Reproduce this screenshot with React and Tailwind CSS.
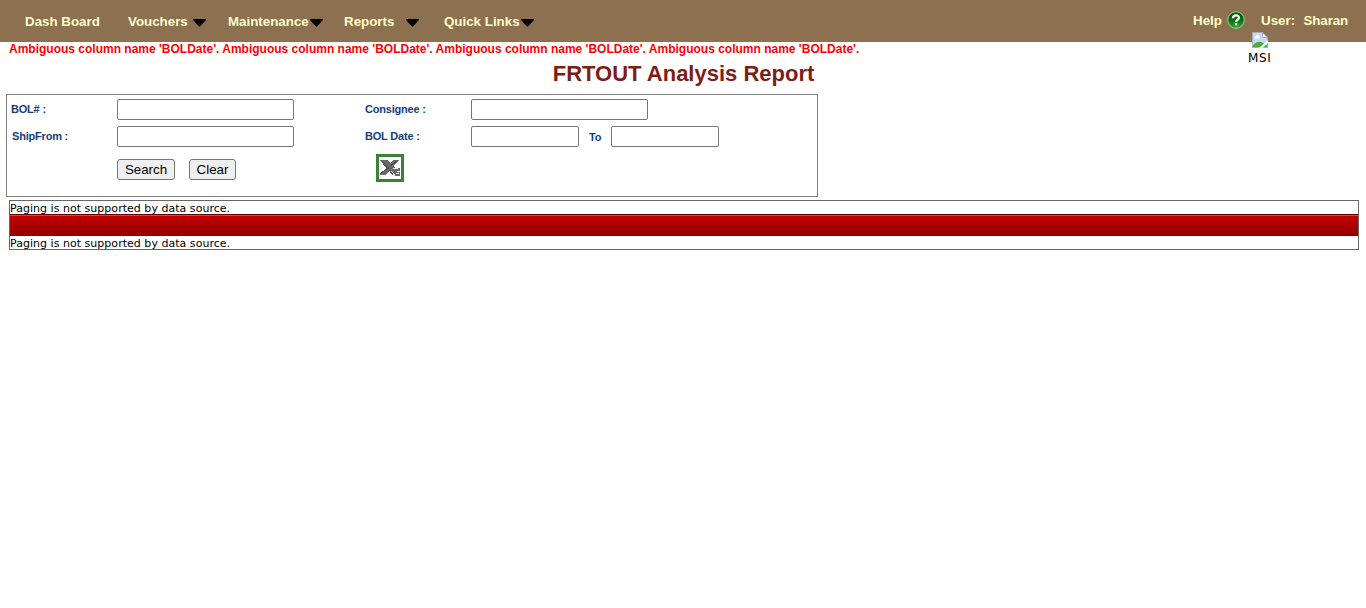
const navFont = 'font-["Liberation_Sans",Arial,sans-serif] text-[13.33px] leading-[16px] font-bold text-[#ffffcc] whitespace-nowrap';

function Arrow() {
  return (
    <svg className="block mt-[5px] h-2 w-[13px]" viewBox="0 0 13 8">
      <path d="M0 0H13V1L7 7.500H6L0 1Z" fill="#000" />
    </svg>
  );
}

function MenuItem({ label, width, arrow = true }) {
  return (
    <div className={`flex justify-between shrink-0 ${width}`}>
      <span>{label}</span>
      {arrow && <Arrow />}
    </div>
  );
}

function HelpIcon() {
  return (
    <svg className="ml-[5px] h-[18px] w-[18px] shrink-0" viewBox="0 0 18 18">
      <defs>
        <linearGradient id="help" x1="0" y1="0" x2="0" y2="1">
          <stop offset="0" stopColor="#065a0c" />
          <stop offset="0.5" stopColor="#087010" />
          <stop offset="1" stopColor="#28b52c" />
        </linearGradient>
      </defs>
      <circle cx="9" cy="9" r="8.300" fill="url(#help)" stroke="#9fce98" strokeWidth="1" />
      <path d="M6 7.200C6 3.500 12 3.500 12 6.800C12 8.800 9 8.700 9 11" fill="none" stroke="#fff" strokeWidth="2.200" />
      <rect x="7.900" y="12" width="2.300" height="2.300" fill="#fff" />
    </svg>
  );
}

function BrokenImage() {
  return (
    <svg className="block h-4 w-4" viewBox="0 0 16 16">
      <path d="M.5 .5H10.500L15.500 5.500V15.500H.5Z" fill="#c5d8f5" stroke="#a9adb2" />
      <path d="M2.500 6.500C2 4.500 4 4.500 4 4C5 2.500 7 3 7 4.500C8.500 4.500 8.500 6.500 7.500 6.500Z" fill="#fff" />
      <path d="M1 15V13.500C4 9 8 9 11 11L15 13V15Z" fill="#4eaa35" />
      <path d="M10.500 .5V5.500H15.500Z" fill="#f5f7fa" stroke="#a9adb2" />
      <path d="M16 8V10.500L10.500 16H7Z" fill="#fff" />
    </svg>
  );
}

function ExcelIcon() {
  return (
    <svg className="block h-7 w-7" viewBox="0 0 28 28" shapeRendering="crispEdges">
      <defs>
        <pattern id="greenDots" width="2" height="2" patternUnits="userSpaceOnUse">
          <path d="M0 0H2V2H0Z" fill="#00a800" />
          <path d="M0 0H1V1H0ZM1 1H2V2H1Z" fill="#3c843c" />
        </pattern>
        <pattern id="grayDots" width="2" height="2" patternUnits="userSpaceOnUse">
          <path d="M0 0H2V2H0Z" fill="#457545" />
          <path d="M0 0H1V1H0ZM1 1H2V2H1Z" fill="#777177" />
        </pattern>
      </defs>
      <path d="M0 0H28V28H0Z" fill="url(#greenDots)" />
      <path d="M3 3H25V25H3Z" fill="#fff" />
      <path d="M4 6H11L14 9L18 6H23V7L17 12L19 14H24V22H18L14 17L9 21H4V20L10 14Z" fill="url(#grayDots)" />
      <path d="M6 7L17 21M4 20L22 6" stroke="#4b554c" strokeWidth="1" fill="none" />
      <path d="M17 14.500H22M21 17.500H24M15 17L19 21.500M20 19.500H23" stroke="#e7eee7" strokeWidth="1" fill="none" />
    </svg>
  );
}

function Field({ width }) {
  return <input className={`block h-[21px] shrink-0 rounded-[2px] border border-[#767676] bg-white px-1 text-[13px] outline-none ${width}`} />;
}

function Label({ children, width }) {
  return <label className={`block shrink-0 text-[11px] leading-[13px] font-bold tracking-[-0.2px] text-[#153e7e] ${width}`}>{children}</label>;
}

function Button({ children, width }) {
  return <button className={`h-[21px] shrink-0 rounded-[3px] border border-[#767676] bg-[#efefef] text-[13.33px] leading-[19px] text-black ${width}`}>{children}</button>;
}

const smallText = 'font-["DejaVu_Sans",Verdana,sans-serif] text-[11px] tracking-[0.03px] text-black whitespace-nowrap';

export default function App() {
  return (
    <div className='h-[608px] w-[1366px] overflow-hidden bg-white font-["Liberation_Sans",Arial,sans-serif]'>
      <header className={`flex h-[42px] items-start justify-between bg-[#8c7050] ${navFont}`}>
        <nav className="flex pt-[14px] pl-[25px]">
          <MenuItem label="Dash Board" width="w-[103px]" arrow={false} />
          <MenuItem label="Vouchers" width="w-[78px] mr-[22px]" />
          <MenuItem label="Maintenance" width="w-[95px] mr-[21px]" />
          <MenuItem label="Reports" width="w-[75px] mr-[25px]" />
          <MenuItem label="Quick Links" width="w-[90px]" />
        </nav>
        <div className="relative flex w-[173px] pt-[13px]">
          <span className="w-[29px]">Help</span>
          <div className="-mt-[2px]"><HelpIcon /></div>
          <span className="ml-4 w-[42.500px]">User:</span>
          <span className="tracking-[-0.1px]">Sharan</span>
          <div className="absolute top-8 left-[55px]">
            <div className="ml-1"><BrokenImage /></div>
            <div className='pt-px font-["DejaVu_Sans",Verdana,sans-serif] text-[12px] leading-[18px] font-normal tracking-[0.6px] text-black'>MSI</div>
          </div>
        </div>
      </header>

      <div className="h-[17px] pl-[9px] text-[12px] leading-[14px] font-bold text-[#ff0000] whitespace-nowrap">
        Ambiguous column name 'BOLDate'. Ambiguous column name 'BOLDate'. Ambiguous column name 'BOLDate'. Ambiguous column name 'BOLDate'.
      </div>
      <h1 className="h-[35px] pl-px text-center text-[22px] leading-[29px] font-bold text-[#7e1c17]">FRTOUT Analysis Report</h1>

      <section className="ml-[6px] h-[103px] w-[812px] border border-[#808080] pt-1 pl-1">
        <div className="flex h-[27px]">
          <div className="pt-1"><Label width="w-[106px]">BOL# :</Label></div>
          <Field width="w-[177px]" />
          <div className="ml-[71px] pt-1"><Label width="w-[106px]">Consignee :</Label></div>
          <Field width="w-[177px]" />
        </div>
        <div className="flex h-[27px]">
          <div className="pt-1"><Label width="w-[106px] pl-px">ShipFrom :</Label></div>
          <Field width="w-[177px]" />
          <div className="ml-[71px] pt-1"><Label width="w-[106px]">BOL Date :</Label></div>
          <Field width="w-[108px]" />
          <div className="ml-[10px] pt-[5px]"><Label width="w-[22px]">To</Label></div>
          <Field width="w-[108px]" />
        </div>
        <div className="flex items-start pl-[106px]">
          <div className="flex w-[259px] gap-[14px] pt-[6px]">
            <Button width="w-[58px]">Search</Button>
            <Button width="w-[47px]">Clear</Button>
          </div>
          <div className="mt-px"><ExcelIcon /></div>
        </div>
      </section>

      <section className="mt-[3px] ml-[9px] h-[50px] w-[1350px] border border-[#666666]">
        <div className={`h-[13px] leading-[16px] ${smallText}`}>Paging is not supported by data source.</div>
        <div className="h-[22px] border-t border-[#650000] bg-linear-to-b from-[#c60000] to-[#900000]">
          <div className="h-px bg-[#dd4444]" />
        </div>
        <div className={`h-[13px] leading-[16px] ${smallText}`}>Paging is not supported by data source.</div>
      </section>
    </div>
  );
}
